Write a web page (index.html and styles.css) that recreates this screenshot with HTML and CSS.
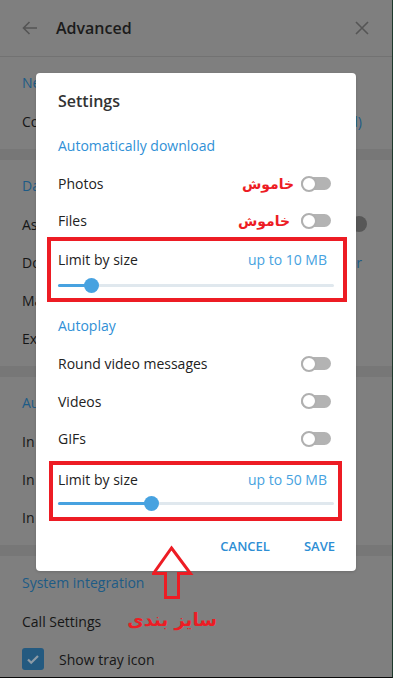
FILE: index.html
```html
<!DOCTYPE html>
<html>
<head>
<meta charset="utf-8">
<link rel="stylesheet" href="styles.css">
</head>
<body>
<div class="page">
  <header class="topbar">
    <svg class="back" width="16" height="16" viewBox="0 0 16 16"><path d="M15 8H1.5M7.5 2L1.5 8l6 6" fill="none" stroke="#555" stroke-width="1.6"/></svg>
    <span class="top-title">Advanced</span>
    <svg class="close" width="14" height="14" viewBox="0 0 14 14"><path d="M1 1l12 12M13 1L1 13" fill="none" stroke="#555" stroke-width="1.6"/></svg>
  </header>
  <section class="sec">
    <div class="sec-title">Network and proxy</div>
    <div class="row"><span>Connection type</span><span class="val">Default (TCP used)</span></div>
  </section>
  <div class="band"></div>
  <section class="sec">
    <div class="sec-title">Data and storage</div>
    <div class="row"><span>Ask download path</span><span class="bg-toggle"><span class="bg-knob"></span></span></div>
    <div class="row"><span>Download path</span><span class="val">Default folder</span></div>
    <div class="row"><span>Manage local storage</span></div>
    <div class="row"><span>Export Telegram data</span></div>
  </section>
  <div class="band"></div>
  <section class="sec">
    <div class="sec-title">Automatic media download</div>
    <div class="row"><span>In private chats</span></div>
    <div class="row"><span>In groups</span></div>
    <div class="row"><span>In channels</span></div>
  </section>
  <div class="band"></div>
  <section class="sec sec-last">
    <div class="sec-title">System integration</div>
    <div class="row"><span>Call Settings</span></div>
    <div class="row check-row">
      <span class="checkbox"><svg width="22" height="22" viewBox="0 0 22 22"><path d="M6 11.5l3.2 3.2L16 8" fill="none" stroke="#8d9ba6" stroke-width="2.2"/></svg></span>
      <span>Show tray icon</span>
    </div>
  </section>
</div>

<div class="dialog">
  <div class="d-title">Settings</div>
  <div class="d-sec">Automatically download</div>
  <div class="d-row"><span>Photos</span><span class="note">خاموش</span><span class="toggle"><span class="knob"></span></span></div>
  <div class="d-row"><span>Files</span><span class="note note-files">خاموش</span><span class="toggle"><span class="knob"></span></span></div>
  <div class="limit">
    <div class="limit-head"><span>Limit by size</span><span class="limit-val">up to 10 MB</span></div>
    <div class="slider"><div class="track"></div><div class="fill" style="width:12%"></div><div class="thumb" style="left:12%"></div></div>
  </div>
  <div class="d-sec d-sec2">Autoplay</div>
  <div class="d-row d-row2"><span>Round video messages</span><span class="toggle"><span class="knob"></span></span></div>
  <div class="d-row d-row2"><span>Videos</span><span class="toggle"><span class="knob"></span></span></div>
  <div class="d-row d-row2"><span>GIFs</span><span class="toggle"><span class="knob"></span></span></div>
  <div class="limit limit2">
    <div class="limit-head"><span>Limit by size</span><span class="limit-val">up to 50 MB</span></div>
    <div class="slider"><div class="track"></div><div class="fill" style="width:33.7%"></div><div class="thumb" style="left:33.7%"></div></div>
  </div>
  <div class="buttons"><span class="btn">CANCEL</span><span class="btn">SAVE</span></div>
  <div class="redbox box1"></div>
  <div class="redbox box2"></div>
</div>

<svg class="arrow" width="44" height="60" viewBox="0 0 44 60"><polygon points="19.5,3 38.5,28.5 26.5,28.5 26.5,52.5 13.5,52.5 13.5,28.5 1.5,28.5" fill="none" stroke="#ed1c24" stroke-width="3" stroke-linejoin="miter"/></svg>
<div class="caption">سایز بندی</div>
</body>
</html>
```
FILE: styles.css
```css
html, body {
  margin: 0;
  padding: 0;
}
body {
  width: 393px;
  height: 678px;
  overflow: hidden;
  position: relative;
  background: #7f7f7f;
  font-family: "Open Sans", "DejaVu Sans", sans-serif;
  font-size: 14px;
  color: #161616;
}
.page {
  width: 392px;
  height: 677px;
  border-right: 1px solid #1f3a2d;
  border-bottom: 1px solid #0a0a0a;
  background: #7f7f7f;
}
.topbar {
  height: 56px;
  border-bottom: 1px solid #727272;
  display: flex;
  align-items: center;
  padding: 0 22px;
}
.back { margin-right: 18px; }
.top-title {
  font-weight: 600;
  font-size: 16px;
  color: #1b1b1b;
  flex: 1;
}
.close { margin-right: 1px; }
.sec {
  padding: 7px 0 9px;
}
.sec-last { padding-top: 8px; }
.sec-title {
  height: 38px;
  line-height: 38px;
  padding-left: 22px;
  color: #1d5b86;
}
.row {
  height: 38px;
  display: flex;
  align-items: center;
  justify-content: space-between;
  padding: 0 30px 0 22px;
  white-space: nowrap;
}
.val { color: #1d5b86; }
.bg-toggle {
  width: 30px;
  height: 13px;
  border-radius: 7px;
  background: #585858;
  position: relative;
  margin-right: -4px;
}
.bg-knob {
  position: absolute;
  right: -1px;
  top: -2px;
  width: 16px;
  height: 16px;
  border-radius: 50%;
  background: #575757;
}
.band {
  height: 11px;
  background: #777777;
}
.check-row { justify-content: flex-start; }
.checkbox {
  width: 22px;
  height: 22px;
  border-radius: 3px;
  background: #245a80;
  margin-right: 15px;
  display: flex;
}

.dialog {
  position: absolute;
  left: 36px;
  top: 73px;
  width: 320px;
  height: 498px;
  box-sizing: border-box;
  background: #ffffff;
  border-radius: 4px;
  padding: 16px 0 10px;
  display: flex;
  flex-direction: column;
  color: #222;
  box-shadow: 0 1px 3px rgba(0,0,0,0.15);
}
.d-title {
  line-height: 24px;
  font-size: 16px;
  font-weight: 600;
  color: #333;
  padding: 0 22px;
}
.d-sec {
  margin-top: 14px;
  height: 38px;
  line-height: 38px;
  padding-left: 22px;
  color: #3090d6;
}
.d-sec2 { margin-top: 14px; }
.d-row {
  height: 37px;
  display: flex;
  align-items: center;
  padding: 0 25px 0 22px;
}
.d-row2 { height: 37.5px; }
.d-row > span:first-child { margin-right: auto; }
.note {
  font-family: "DejaVu Sans", sans-serif;
  font-weight: bold;
  font-size: 14px;
  color: #ed1c24;
  margin-right: 7px;
  direction: rtl;
}
.note-files { margin-right: 11px; }
.toggle {
  width: 30px;
  height: 13px;
  border-radius: 7px;
  background: #b3b3b3;
  position: relative;
}
.knob {
  position: absolute;
  left: 0;
  top: -1.5px;
  width: 16px;
  height: 16px;
  box-sizing: border-box;
  border-radius: 50%;
  background: #fff;
  border: 2px solid #b0b0b0;
}
.limit {
  margin-top: 11px;
  padding: 0 29px 0 22px;
}
.limit2 { margin-top: 12px; }
.limit-head {
  display: flex;
  justify-content: space-between;
  line-height: 20px;
}
.limit-val { color: #47a2e0; }
.slider {
  position: relative;
  height: 16px;
  margin-top: 7px;
  margin-right: -7px;
}
.limit2 .slider { margin-top: 6px; }
.track, .fill {
  position: absolute;
  left: 0;
  top: 6.5px;
  height: 3px;
  border-radius: 2px;
}
.track { right: 0; background: #e0e8ee; }
.fill { background: #47a2e0; }
.thumb {
  position: absolute;
  top: 0.5px;
  width: 15px;
  height: 15px;
  margin-left: -7.5px;
  border-radius: 50%;
  background: #47a2e0;
}
.buttons {
  margin-top: auto;
  height: 30px;
  display: flex;
  justify-content: flex-end;
  align-items: center;
  gap: 34px;
  padding: 0 21px;
}
.btn {
  font-size: 13px;
  font-weight: 600;
  color: #2d8ed4;
}
.redbox {
  position: absolute;
  box-sizing: border-box;
  border: 4px solid #ed1c24;
}
.box1 { left: 11px; top: 164px; width: 300px; height: 65px; }
.box2 { left: 13px; top: 388px; width: 293px; height: 60px; }

.arrow {
  position: absolute;
  left: 152px;
  top: 545px;
}
.caption {
  position: absolute;
  left: 122px;
  top: 605px;
  width: 100px;
  text-align: center;
  direction: rtl;
  font-family: "DejaVu Sans", sans-serif;
  font-weight: bold;
  font-size: 18px;
  line-height: 30px;
  color: #ed1c24;
  white-space: nowrap;
}
```
